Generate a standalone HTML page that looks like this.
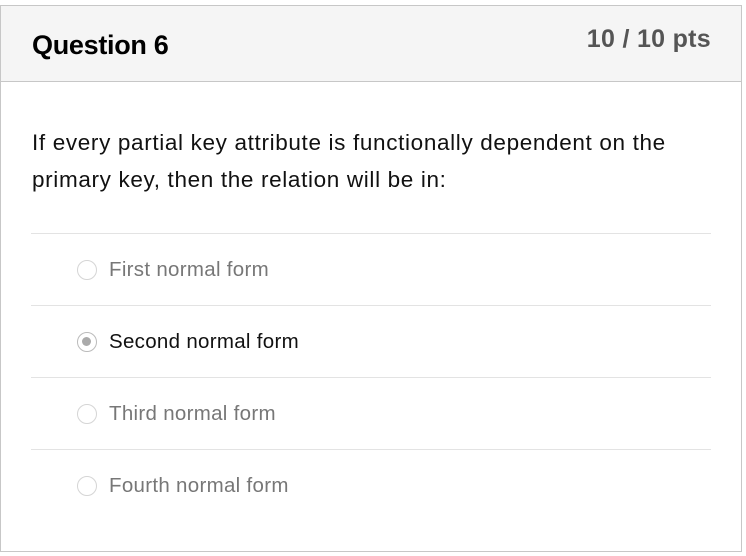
<!DOCTYPE html>
<html><head><style>
body{margin:0;background:#fff;font-family:"Liberation Sans",sans-serif;}
.box{position:absolute;left:0;top:5px;width:740px;height:545px;border:1px solid #c7c7c7;}
.hdr{position:absolute;left:0;top:0;width:740px;height:75px;background:#f5f5f5;border-bottom:1px solid #c7c7c7;}
.t{position:absolute;left:31px;top:24px;font-size:27px;font-weight:bold;color:#000;letter-spacing:-0.3px}
.p{position:absolute;right:30px;top:19px;font-size:25px;font-weight:bold;color:#555;letter-spacing:0.3px}
.q{position:absolute;left:31px;font-size:22.5px;line-height:37px;width:660px;color:#111;letter-spacing:0.65px}
.sep{position:absolute;left:31px;width:680px;height:1px;background:#e3e3e3}
.o{position:absolute;height:24px;display:flex;align-items:center;font-size:20.5px;color:#777;letter-spacing:0.3px}
.r{width:20px;height:20px;border:1.5px solid #d5d5d5;border-radius:50%;margin-right:12px;box-sizing:border-box;position:relative}
.sel{border-color:#bbb}
.sel::after{content:"";position:absolute;left:4px;top:4px;width:9px;height:9px;border-radius:50%;background:#aaa}
</style></head><body>
<div class="box">
<div class="hdr"><div class="t">Question 6</div><div class="p">10 / 10 pts</div></div>
<div class="q" style="top:118px">If every partial key attribute is functionally dependent on the primary key, then the relation will be in:</div>
</div>
<div class="sep" style="top:233px"></div>
<div class="sep" style="top:305px"></div>
<div class="sep" style="top:377px"></div>
<div class="sep" style="top:449px"></div>
<div class="o" style="top:258px;left:77px"><div class="r"></div>First normal form</div>
<div class="o" style="top:330px;left:77px;color:#111"><div class="r sel"></div>Second normal form</div>
<div class="o" style="top:402px;left:77px"><div class="r"></div>Third normal form</div>
<div class="o" style="top:474px;left:77px"><div class="r"></div>Fourth normal form</div>
</body></html>
